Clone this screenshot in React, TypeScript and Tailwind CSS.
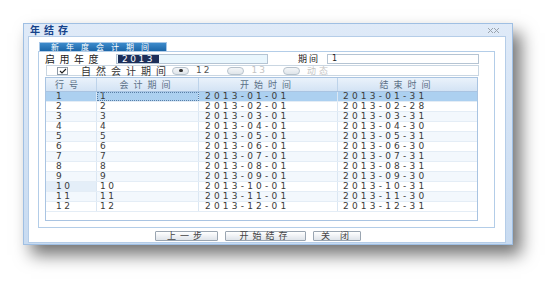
import React from "react";

const cjk = { fontFamily: '"Noto Sans CJK SC", "Noto Sans", sans-serif' };
const num = { fontFamily: '"DejaVu Sans", "Liberation Sans", sans-serif' };

const periods = [
  { no: 1, start: "2013-01-01", end: "2013-01-31" },
  { no: 2, start: "2013-02-01", end: "2013-02-28" },
  { no: 3, start: "2013-03-01", end: "2013-03-31" },
  { no: 4, start: "2013-04-01", end: "2013-04-30" },
  { no: 5, start: "2013-05-01", end: "2013-05-31" },
  { no: 6, start: "2013-06-01", end: "2013-06-30" },
  { no: 7, start: "2013-07-01", end: "2013-07-31" },
  { no: 8, start: "2013-08-01", end: "2013-08-31" },
  { no: 9, start: "2013-09-01", end: "2013-09-30" },
  { no: 10, start: "2013-10-01", end: "2013-10-31" },
  { no: 11, start: "2013-11-01", end: "2013-11-30" },
  { no: 12, start: "2013-12-01", end: "2013-12-31" },
];

// 单选框，图上是被拉宽的椭圆
const Radio = ({ checked, label, disabled }: { checked?: boolean; label: string; disabled?: boolean }) => (
  <div className="flex items-center">
    <div className="w-[17px] h-[8px] rounded-full border border-[#b7c2cc] bg-gradient-to-b from-[#f4f6f8] to-[#dfe5ea] flex items-center justify-center">
      {checked && <div className="w-[4px] h-[3px] rounded-full bg-[#333]" />}
    </div>
    <span
      className={`ml-[7px] text-[9px] leading-[9px] ${disabled ? "text-[#c4c4c4]" : "text-[#555]"} ${label === "动态" ? "tracking-[3px]" : "tracking-[2px]"}`}
      style={label === "动态" ? cjk : num}
    >
      {label}
    </span>
  </div>
);

const Button = ({ label, w }: { label: string; w: string }) => (
  <button
    className={`${w} h-[10px] border border-[#9aa5b1] rounded-[1px] bg-gradient-to-b from-[#ffffff] to-[#dfe4ea] text-[9px] leading-[8px] text-[#444] tracking-[4px] flex items-center justify-center`}
    style={cjk}
  >
    {label}
  </button>
);

export default function App() {
  return (
    <div className="w-[557px] h-[289px] bg-white pl-[23px] pt-[23px]">
      <div className="w-[490px] h-[222px] flex flex-col border border-[#9fbfe3] bg-gradient-to-b from-[#dfeaf8] to-[#c8dbf1] shadow-[8px_10px_16px_rgba(0,0,0,0.55)]">
        {/* 标题栏 */}
        <div className="h-[12px] flex items-center justify-between pl-[6px] pr-[13px]">
          <span className="text-[10px] leading-[10px] font-bold text-[#15428b] tracking-[4px]" style={cjk}>
            年结存
          </span>
          <svg width="11" height="5" viewBox="0 0 11 5">
            <path d="M0 0 L5 5 M5 0 L0 5 M6 0 L11 5 M11 0 L6 5" stroke="#9aa3ad" strokeWidth="1" />
          </svg>
        </div>

        <div className="flex-1 ml-[4px] mr-[6px] mb-[1px] bg-white border border-[#b5cde8] flex flex-col">
          <div className="ml-[9px] mt-[5px] w-[457px] flex flex-col">
            {/* 页签 */}
            <div className="h-[9px] flex">
              <div
                className="ml-[1px] w-[128px] h-[9px] bg-gradient-to-b from-[#3d8bcb] to-[#1b66a8] border border-[#a6c6e6] border-b-0 text-white text-[8px] leading-[8px] tracking-[7px] pl-[11px]"
                style={cjk}
              >
                新年度会计期间
              </div>
            </div>

            <div className="h-[177px] border border-[#b3cde8] flex flex-col">
              {/* 启用年度 / 期间 */}
              <div className="mt-[2px] h-[10px] flex items-center">
                <span className="ml-[6px] w-[71px] text-[10px] leading-[10px] text-[#222] tracking-[4.5px]" style={cjk}>
                  启用年度
                </span>
                <div className="w-[152px] h-[10px] border border-[#b5c4d3] bg-[#e9f6fd] flex items-center pl-[1px]">
                  <span className="bg-[#1c2f5a] text-white text-[9px] leading-[8px] tracking-[2.5px] px-[4px]" style={num}>
                    2013
                  </span>
                </div>
                <span className="ml-[30px] w-[29px] text-[9px] leading-[10px] text-[#222] tracking-[2px]" style={cjk}>
                  期间
                </span>
                <div className="w-[152px] h-[10px] border border-[#b5c4d3] bg-white flex items-center pl-[4px]">
                  <span className="text-[8px] leading-[8px] text-[#222]" style={num}>
                    1
                  </span>
                </div>
              </div>

              {/* 自然会计期间 */}
              <div className="mt-[1px] ml-[7px] w-[433px] h-[11px] border border-[#c9d6e2] flex items-center">
                <div className="ml-[10px] w-[11px] h-[8px] border border-[#8e9aa6] bg-white flex items-center justify-center">
                  <svg width="8" height="6" viewBox="0 0 8 6">
                    <path d="M1 3 L3 5 L7 1" stroke="#222" strokeWidth="1.2" fill="none" />
                  </svg>
                </div>
                <span className="ml-[13px] text-[10px] leading-[10px] text-[#333] tracking-[5px]" style={cjk}>
                  自然会计期间
                </span>
                <div className="ml-[1px] flex items-center gap-[16px]">
                  <Radio checked label="12" />
                  <Radio label="13" disabled />
                  <Radio label="动态" disabled />
                </div>
              </div>

              {/* 会计期间表格 */}
              <div className="mt-[1px] ml-[6px] w-[433px] h-[144px] border border-[#a9c4e2] bg-white flex flex-col">
                <div className="h-[14px] flex bg-gradient-to-b from-[#eaf2fb] to-[#d3e3f4] border-b border-[#a9c4e2] text-[9px] leading-[13px] text-[#5a6f86]" style={cjk}>
                  <div className="w-[51px] pl-[9px] tracking-[5px] border-r border-[#bdd3ea]">行号</div>
                  <div className="w-[102px] text-center tracking-[5px] border-r border-[#bdd3ea]">会计期间</div>
                  <div className="w-[139px] text-center tracking-[5px] border-r border-[#bdd3ea]">开始时间</div>
                  <div className="flex-1 text-center tracking-[5px]">结束时间</div>
                </div>
                {periods.map((p, i) => {
                  const selected = i === 0;
                  const bg = selected ? "bg-[#acd0f0]" : i % 2 === 0 ? "bg-[#f3f8fd]" : "bg-white";
                  return (
                    <div
                      key={p.no}
                      className={`h-[10px] flex ${bg} border-b border-[#e4edf6] text-[9px] leading-[9px] text-[#3a3a3a]`}
                      style={num}
                    >
                      <div className={`w-[51px] pl-[10px] tracking-[2.5px] border-r border-[#dbe7f3] ${p.no === 10 ? "bg-[#e4eef8]" : ""}`}>
                        {p.no}
                      </div>
                      <div className={`w-[102px] pl-[3px] tracking-[2.5px] border-r border-[#dbe7f3] ${selected ? "outline-1 outline-dotted outline-offset-[-1px] outline-[#5a7fa6]" : ""}`}>
                        {p.no}
                      </div>
                      <div className="w-[139px] pl-[6px] tracking-[3.2px] border-r border-[#dbe7f3]">{p.start}</div>
                      <div className="flex-1 pl-[5px] tracking-[3.2px]">{p.end}</div>
                    </div>
                  );
                })}
              </div>
            </div>
          </div>

          {/* 按钮 */}
          <div className="mt-[3px] ml-[126px] flex gap-[7px]">
            <Button label="上一步" w="w-[63px]" />
            <Button label="开始结存" w="w-[81px]" />
            <Button label="关 闭" w="w-[48px]" />
          </div>
        </div>
      </div>
    </div>
  );
}
